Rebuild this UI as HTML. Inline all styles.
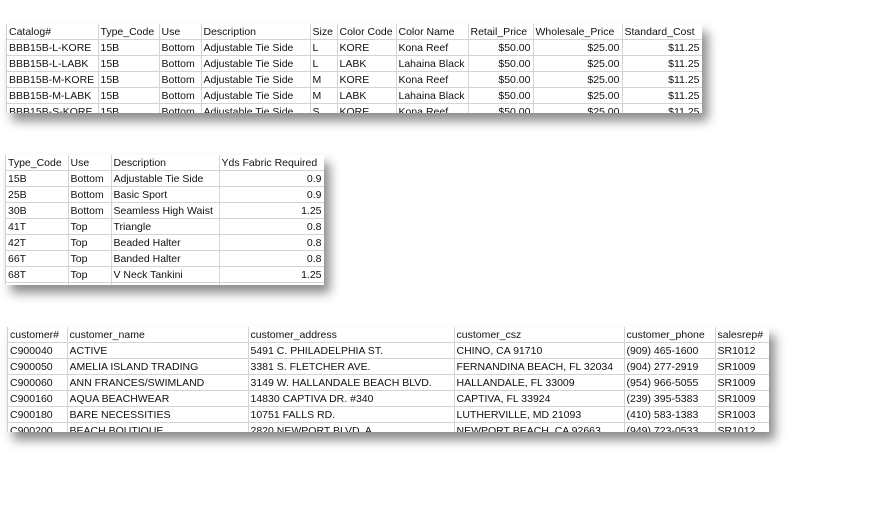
<!DOCTYPE html>
<html><head><meta charset="utf-8"><style>
body{margin:0;width:885px;height:516px;background:#fff;position:relative;overflow:hidden;font-family:"Liberation Sans",sans-serif;font-size:10.5px;color:#111}
.w{position:absolute;overflow:hidden;background:#fff;box-shadow:6px 8px 10px rgba(0,0,0,.45);border-left:1px solid #d0d0d0}
table{border-collapse:collapse;table-layout:fixed}
td{height:14px;border-right:1px solid #d4d4d4;border-bottom:1px solid #d4d4d4;padding:1px 2px 0 2px;white-space:nowrap;overflow:hidden;line-height:14px}
td.r{text-align:right}
</style></head><body>

<div class="w" style="left:6px;top:24px;width:695px;height:89px">
<table style="width:695px">
<colgroup><col style="width:91px"><col style="width:61px"><col style="width:42px"><col style="width:109px"><col style="width:27px"><col style="width:59px"><col style="width:72px"><col style="width:65px"><col style="width:89px"><col style="width:80px"></colgroup>
<tr><td>Catalog#</td><td>Type_Code</td><td>Use</td><td>Description</td><td>Size</td><td>Color Code</td><td>Color Name</td><td>Retail_Price</td><td>Wholesale_Price</td><td>Standard_Cost</td></tr>
<tr><td>BBB15B-L-KORE</td><td>15B</td><td>Bottom</td><td>Adjustable Tie Side</td><td>L</td><td>KORE</td><td>Kona Reef</td><td class="r">$50.00</td><td class="r">$25.00</td><td class="r">$11.25</td></tr>
<tr><td>BBB15B-L-LABK</td><td>15B</td><td>Bottom</td><td>Adjustable Tie Side</td><td>L</td><td>LABK</td><td>Lahaina Black</td><td class="r">$50.00</td><td class="r">$25.00</td><td class="r">$11.25</td></tr>
<tr><td>BBB15B-M-KORE</td><td>15B</td><td>Bottom</td><td>Adjustable Tie Side</td><td>M</td><td>KORE</td><td>Kona Reef</td><td class="r">$50.00</td><td class="r">$25.00</td><td class="r">$11.25</td></tr>
<tr><td>BBB15B-M-LABK</td><td>15B</td><td>Bottom</td><td>Adjustable Tie Side</td><td>M</td><td>LABK</td><td>Lahaina Black</td><td class="r">$50.00</td><td class="r">$25.00</td><td class="r">$11.25</td></tr>
<tr><td>BBB15B-S-KORE</td><td>15B</td><td>Bottom</td><td>Adjustable Tie Side</td><td>S</td><td>KORE</td><td>Kona Reef</td><td class="r">$50.00</td><td class="r">$25.00</td><td class="r">$11.25</td></tr>
</table></div>

<div class="w" style="left:5px;top:155px;width:318px;height:130px">
<table style="width:318px">
<colgroup><col style="width:62px"><col style="width:43px"><col style="width:108px"><col style="width:105px"></colgroup>
<tr><td>Type_Code</td><td>Use</td><td>Description</td><td>Yds Fabric Required</td></tr>
<tr><td>15B</td><td>Bottom</td><td>Adjustable Tie Side</td><td class="r">0.9</td></tr>
<tr><td>25B</td><td>Bottom</td><td>Basic Sport</td><td class="r">0.9</td></tr>
<tr><td>30B</td><td>Bottom</td><td>Seamless High Waist</td><td class="r">1.25</td></tr>
<tr><td>41T</td><td>Top</td><td>Triangle</td><td class="r">0.8</td></tr>
<tr><td>42T</td><td>Top</td><td>Beaded Halter</td><td class="r">0.8</td></tr>
<tr><td>66T</td><td>Top</td><td>Banded Halter</td><td class="r">0.8</td></tr>
<tr><td>68T</td><td>Top</td><td>V Neck Tankini</td><td class="r">1.25</td></tr>
<tr><td></td><td></td><td></td><td></td></tr>
</table></div>

<div class="w" style="left:7px;top:327px;width:761px;height:105px">
<table style="width:761px">
<colgroup><col style="width:59px"><col style="width:181px"><col style="width:206px"><col style="width:170px"><col style="width:91px"><col style="width:54px"></colgroup>
<tr><td>customer#</td><td>customer_name</td><td>customer_address</td><td>customer_csz</td><td>customer_phone</td><td>salesrep#</td></tr>
<tr><td>C900040</td><td>ACTIVE</td><td>5491 C. PHILADELPHIA ST.</td><td>CHINO, CA 91710</td><td>(909) 465-1600</td><td>SR1012</td></tr>
<tr><td>C900050</td><td>AMELIA ISLAND TRADING</td><td>3381 S. FLETCHER AVE.</td><td>FERNANDINA BEACH, FL 32034</td><td>(904) 277-2919</td><td>SR1009</td></tr>
<tr><td>C900060</td><td>ANN FRANCES/SWIMLAND</td><td>3149 W. HALLANDALE BEACH BLVD.</td><td>HALLANDALE, FL 33009</td><td>(954) 966-5055</td><td>SR1009</td></tr>
<tr><td>C900160</td><td>AQUA BEACHWEAR</td><td>14830 CAPTIVA DR. #340</td><td>CAPTIVA, FL 33924</td><td>(239) 395-5383</td><td>SR1009</td></tr>
<tr><td>C900180</td><td>BARE NECESSITIES</td><td>10751 FALLS RD.</td><td>LUTHERVILLE, MD 21093</td><td>(410) 583-1383</td><td>SR1003</td></tr>
<tr><td>C900200</td><td>BEACH BOUTIQUE</td><td>2820 NEWPORT BLVD. A</td><td>NEWPORT BEACH, CA 92663</td><td>(949) 723-0533</td><td>SR1012</td></tr>
</table></div>

</body></html>
